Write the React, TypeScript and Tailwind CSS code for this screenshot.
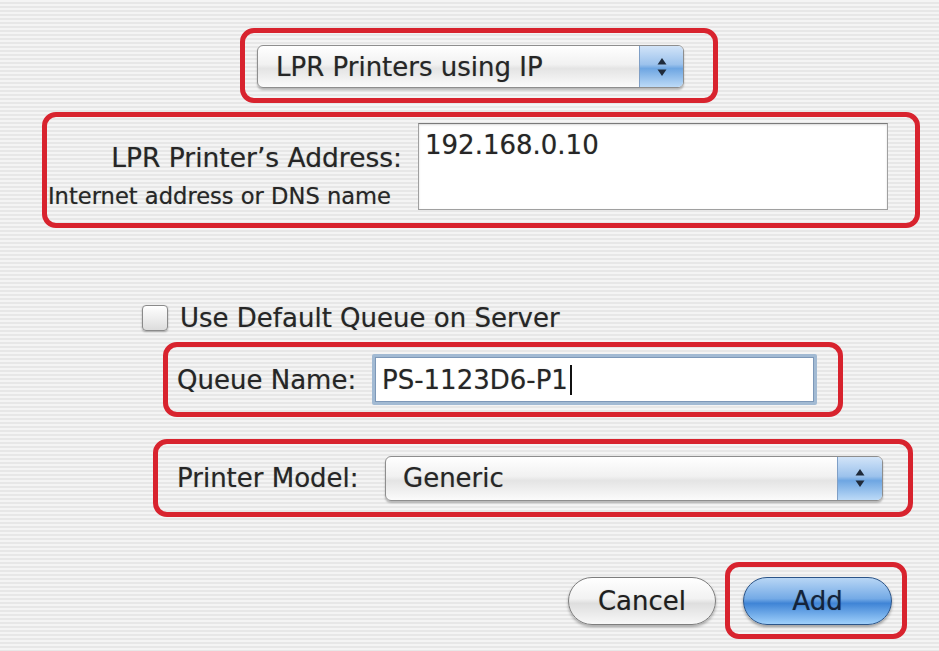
import React from "react";

function Stepper() {
  return (
    <svg width="12" height="22" viewBox="0 0 12 22">
      <path d="M6 2 L10.5 8.5 L1.5 8.5 Z" fill="#1f2a3a" />
      <path d="M6 20 L10.5 13.5 L1.5 13.5 Z" fill="#1f2a3a" />
    </svg>
  );
}

function App() {
  return (
    <div className="w-[939px] h-[651px] overflow-hidden flex flex-col font-['DejaVu_Sans',sans-serif] text-[#262626] [text-shadow:0_0_1px_rgba(0,0,0,0.35)] bg-[repeating-linear-gradient(180deg,#f4f4f4_0px,#f4f4f4_2px,#e7e7e7_2px,#e7e7e7_4px)]">
      {/* Row 1: popup */}
      <div className="mt-[28px] ml-[240px] w-[478px] h-[75px] border-[5px] border-[#d8232e] rounded-[14px] pl-[12px] pt-[12px]">
        <div className="w-[427px] h-[43px] flex rounded-[6px] border border-[#8e8e8e] shadow-[0_2px_2px_rgba(0,0,0,0.25)] bg-[linear-gradient(180deg,#ffffff_0%,#f1f1f1_45%,#e4e4e4_55%,#fbfbfb_100%)] overflow-hidden">
          <div className="flex-1 flex items-center pl-[18px] text-[26px] leading-[30px]">LPR Printers using IP</div>
          <div className="w-[44px] flex items-center justify-center border-l border-[#7f9fc6] bg-[linear-gradient(180deg,#d2e4f8_0%,#9cc2ec_45%,#6ea6e2_55%,#bcdaf7_100%)]">
            <Stepper />
          </div>
        </div>
      </div>

      {/* Row 2: address */}
      <div className="mt-[9px] ml-[42px] w-[878px] h-[116px] border-[5px] border-[#d8232e] rounded-[14px] flex items-start pt-[6px]">
        <div className="w-[355px] flex flex-col items-end pt-[20px]">
          <div className="text-[26.5px] leading-[30px] whitespace-nowrap">LPR Printer’s Address:</div>
          <div className="mt-[10px] pr-[11px] text-[22.6px] leading-[26px] whitespace-nowrap">Internet address or DNS name</div>
        </div>
        <div className="ml-[16px] w-[470px] h-[87px] bg-white border border-[#a0a0a0] border-t-[#7a7a7a] shadow-[inset_0_1px_2px_rgba(0,0,0,0.15)] px-[6px] pt-[6px] text-[26px] leading-[30px]">
          192.168.0.10
        </div>
      </div>

      {/* Checkbox */}
      <div className="mt-[75px] ml-[142px] h-[30px] flex items-center">
        <div className="w-[26px] h-[26px] rounded-[4px] border border-[#8a8a8a] bg-[linear-gradient(180deg,#ffffff_0%,#eeeeee_50%,#dcdcdc_100%)] shadow-[0_1px_2px_rgba(0,0,0,0.3)]" />
        <div className="ml-[12px] text-[26px] leading-[30px] whitespace-nowrap">Use Default Queue on Server</div>
      </div>

      {/* Row 3: queue name */}
      <div className="mt-[9px] ml-[163px] w-[680px] h-[75px] border-[5px] border-[#d8232e] rounded-[14px] flex items-center pl-[9px]">
        <div className="w-[195px] text-[26px] leading-[30px] whitespace-nowrap">Queue Name:</div>
        <div className="w-[445px] h-[51px] border-[3px] border-[#a2bad3] rounded-[2px] bg-white flex items-center">
          <div className="w-full h-full border border-[#7d98b8] flex items-center pl-[6px] text-[26px] leading-[30px] whitespace-nowrap">
            PS-1123D6-P1
            <span className="ml-[2px] w-[2px] h-[30px] bg-[#111]" />
          </div>
        </div>
      </div>

      {/* Row 4: printer model */}
      <div className="mt-[22px] ml-[153px] w-[760px] h-[78px] border-[5px] border-[#d8232e] rounded-[14px] flex items-center pl-[19px]">
        <div className="w-[208px] text-[26px] leading-[30px] whitespace-nowrap">Printer Model:</div>
        <div className="w-[498px] h-[45px] flex rounded-[6px] border border-[#8e8e8e] shadow-[0_2px_2px_rgba(0,0,0,0.25)] bg-[linear-gradient(180deg,#ffffff_0%,#f1f1f1_45%,#e4e4e4_55%,#fbfbfb_100%)] overflow-hidden">
          <div className="flex-1 flex items-center pl-[17px] text-[26px] leading-[30px]">Generic</div>
          <div className="w-[45px] flex items-center justify-center border-l border-[#7f9fc6] bg-[linear-gradient(180deg,#d2e4f8_0%,#9cc2ec_45%,#6ea6e2_55%,#bcdaf7_100%)]">
            <Stepper />
          </div>
        </div>
      </div>

      {/* Row 5: buttons */}
      <div className="mt-[45px] ml-[568px] flex items-center">
        <div className="w-[148px] h-[48px] rounded-full border border-[#7e7e7e] bg-[linear-gradient(180deg,#ffffff_0%,#f2f2f2_45%,#dedede_55%,#f8f8f8_100%)] shadow-[0_2px_3px_rgba(0,0,0,0.3)] flex items-center justify-center text-[26px] leading-[30px] text-[#1e1e1e]">
          Cancel
        </div>
        <div className="ml-[9px] w-[182px] h-[77px] border-[5px] border-[#d8232e] rounded-[14px] pl-[13px] flex items-center">
          <div className="w-[149px] h-[48px] rounded-full border border-[#2c5589] bg-[linear-gradient(180deg,#b8d6f5_0%,#74aae6_45%,#3f84d6_55%,#9fd0fb_100%)] shadow-[0_2px_3px_rgba(0,0,0,0.35)] flex items-center justify-center text-[26px] leading-[30px] text-[#14233a]">
            Add
          </div>
        </div>
      </div>
    </div>
  );
}

export default App;
